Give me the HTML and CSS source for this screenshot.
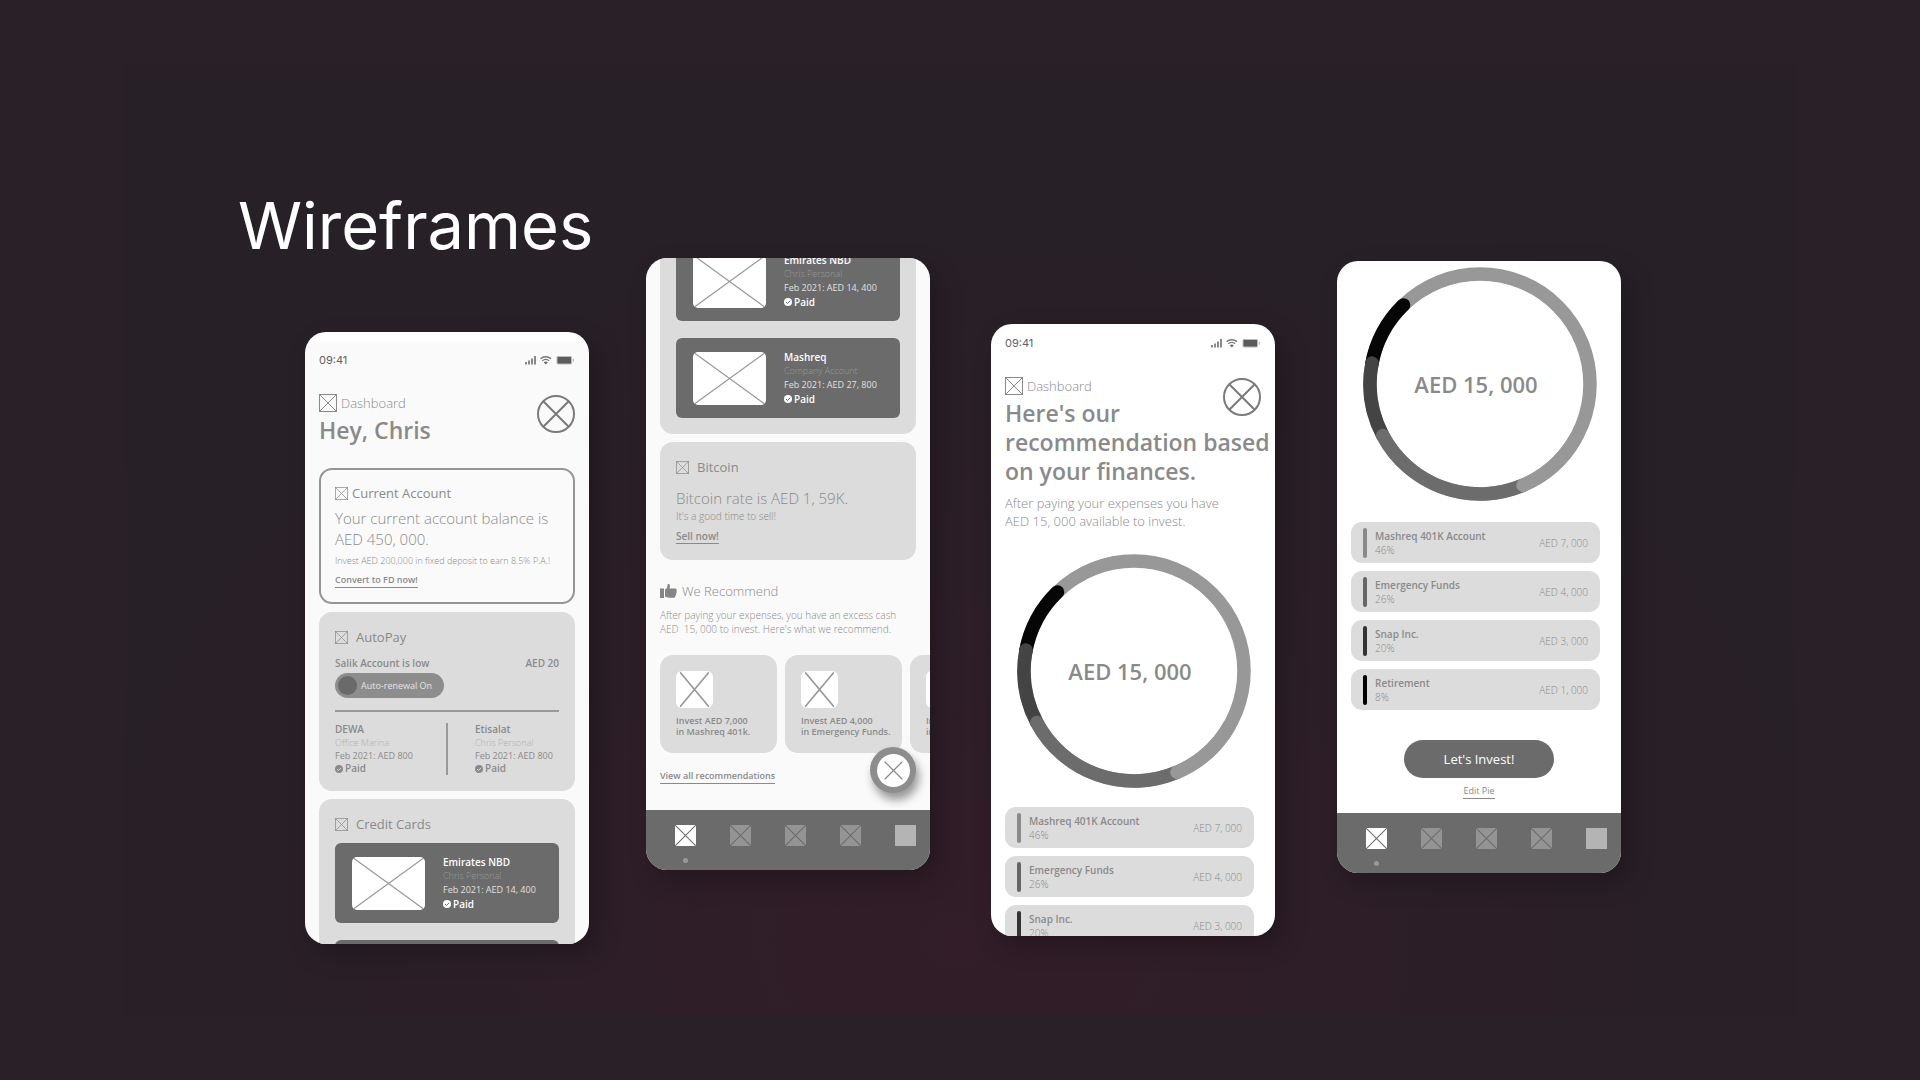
FILE: index.html
```
<!DOCTYPE html>
<html lang="en">
<head>
  <meta charset="UTF-8">
  <title>Wireframes</title>
  <link rel="stylesheet" href="styles.css">
</head>
<body>

  <!-- shared symbols -->
  <svg class="defs" aria-hidden="true">
    <symbol id="box" viewBox="0 0 18 18">
      <rect x=".5" y=".5" width="17" height="17"/>
      <path d="M.5 .5l17 17M17.5 .5l-17 17"/>
    </symbol>
    <symbol id="cross" viewBox="0 0 20 20" preserveAspectRatio="none">
      <path d="M0 0l20 20M20 0L0 20"/>
    </symbol>
    <symbol id="round" viewBox="0 0 38 38">
      <circle cx="19" cy="19" r="18"/>
      <path d="M6.3 6.3l25.4 25.4M31.7 6.3L6.3 31.7"/>
    </symbol>
    <symbol id="check" viewBox="0 0 8 8">
      <circle cx="4" cy="4" r="4" fill="currentColor"/>
      <path class="tick" d="M2 4.1l1.5 1.4L6.1 2.8"/>
    </symbol>
    <symbol id="system" viewBox="0 0 50 12">
      <path d="M1 8v2.5M4 6.5v4M7 4.5v6M10 2v8.500" stroke="#6b6b6b" stroke-width="1.6"/>
      <path d="M15.500 4.700a8 8 0 0 1 10.500 0M17.300 6.800a5.300 5.300 0 0 1 6.900 0" fill="none" stroke="#777" stroke-width="1.300"/>
      <path d="M18.800 8.300a3 3 0 0 1 4 0l-2 2.200z" fill="#666"/>
      <rect x="32" y="2.500" width="14.500" height="7.500" rx="1" fill="#5c5c5c" stroke="#bbb"/>
      <path d="M48.300 4.800v3" stroke="#bbb" stroke-width="1.200"/>
    </symbol>
    <symbol id="ring" viewBox="0 0 234 234">
      <g fill="none" stroke-width="13.500" stroke-linecap="round">
        <circle cx="117" cy="117" r="110" stroke="#989898"/>
        <circle cx="117" cy="117" r="110" pathLength="360" stroke="#060606" stroke-dasharray="36 400" transform="rotate(190 117 117)"/>
        <circle cx="117" cy="117" r="110" pathLength="360" stroke="#444" stroke-dasharray="39 400" transform="rotate(152 117 117)"/>
        <circle cx="117" cy="117" r="110" pathLength="360" stroke="#6c6c6c" stroke-dasharray="85 400" transform="rotate(67 117 117)"/>
        <circle cx="117" cy="117" r="110" pathLength="360" stroke="#989898" stroke-dasharray="37 400" transform="rotate(30 117 117)"/>
      </g>
    </symbol>
  </svg>

  <h1>Wireframes</h1>

  <main class="phones">

    <!-- home -->
    <section class="phone home">
      <div class="screen">
        <div class="status"><span>09:41</span><svg><use href="#system"/></svg></div>
        <header class="head">
          <div class="crumb"><svg><use href="#box"/></svg>Dashboard</div>
          <h2>Hey, Chris</h2>
          <button class="avatar" aria-label="Profile"><svg><use href="#round"/></svg></button>
        </header>

        <article class="card outlined">
          <h3 class="near"><svg><use href="#box"/></svg>Current Account</h3>
          <p class="big">Your current account balance is AED 450, 000.</p>
          <p class="small">Invest AED 200,000 in fixed deposit to earn 8.5% P.A.!</p>
          <a class="link" href="#">Convert to FD now!</a>
        </article>

        <article class="card">
          <h3><svg><use href="#box"/></svg>AutoPay</h3>
          <div class="low"><span>Salik Account is low</span><span>AED 20</span></div>
          <label class="toggle"><input type="checkbox" checked>Auto-renewal On</label>
          <div class="bills">
            <div class="bill">
              <b>DEWA</b>
              <i>Office Marina</i>
              <span>Feb 2021: AED 800</span>
              <b class="paid"><svg><use href="#check"/></svg>Paid</b>
            </div>
            <div class="bill">
              <b>Etisalat</b>
              <i>Chris Personal</i>
              <span>Feb 2021: AED 800</span>
              <b class="paid"><svg><use href="#check"/></svg>Paid</b>
            </div>
          </div>
        </article>

        <article class="card">
          <h3><svg><use href="#box"/></svg>Credit Cards</h3>
          <div class="cards">
            <div class="credit">
              <svg class="photo"><use href="#cross"/></svg>
              <div class="bill">
                <b>Emirates NBD</b>
                <i>Chris Personal</i>
                <span>Feb 2021: AED 14, 400</span>
                <b class="paid"><svg><use href="#check"/></svg>Paid</b>
              </div>
            </div>
            <div class="credit"></div>
          </div>
        </article>
      </div>
    </section>

    <!-- home, scrolled down -->
    <section class="phone scrolled">
      <div class="screen">
        <article class="card">
          <div class="cards">
            <div class="credit">
              <svg class="photo"><use href="#cross"/></svg>
              <div class="bill">
                <b>Emirates NBD</b>
                <i>Chris Personal</i>
                <span>Feb 2021: AED 14, 400</span>
                <b class="paid"><svg><use href="#check"/></svg>Paid</b>
              </div>
            </div>
            <div class="credit">
              <svg class="photo"><use href="#cross"/></svg>
              <div class="bill">
                <b>Mashreq</b>
                <i>Company Account</i>
                <span>Feb 2021: AED 27, 800</span>
                <b class="paid"><svg><use href="#check"/></svg>Paid</b>
              </div>
            </div>
          </div>
        </article>

        <article class="card bitcoin">
          <h3><svg><use href="#box"/></svg>Bitcoin</h3>
          <p class="big">Bitcoin rate is AED 1, 59K.</p>
          <p class="small">It's a good time to sell!</p>
          <a class="link" href="#">Sell now!</a>
        </article>

        <h3 class="recommend">
          <svg viewBox="0 0 17 14"><path d="M0 4.500h4V14H0zM5 5.500C7 4.500 7.500 3 7.500 1 7.500-.3 10-.3 10 2c0 1-.3 1.700-.6 2.500H15c1.500 0 2.200 1.300 1.300 2.400.7.800.6 1.800-.2 2.400.4.900.1 1.800-.7 2.200.2 1.300-.6 2.200-2 2.200H9c-1.500 0-2.500-.7-4-1.200z"/></svg>
          We Recommend
        </h3>
        <p class="small">After paying your expenses, you have an excess cash<br>AED&nbsp; 15, 000 to invest. Here's what we recommend.</p>
        <div class="tiles">
          <div class="tile"><svg><use href="#cross"/></svg>Invest AED 7,000<br>in Mashreq 401k.</div>
          <div class="tile"><svg><use href="#cross"/></svg>Invest AED 4,000<br>in Emergency Funds.</div>
          <div class="tile"><svg><use href="#cross"/></svg>Invest AED 3,000<br>in Snap Inc.</div>
        </div>
        <a class="link" href="#">View all recommendations</a>
      </div>
      <button class="fab" aria-label="Assistant"><svg><use href="#cross"/></svg></button>
      <nav class="tabs">
        <a class="active" href="#" aria-label="Home"><svg><use href="#cross"/></svg></a>
        <a href="#" aria-label="Accounts"><svg><use href="#cross"/></svg></a>
        <a href="#" aria-label="Cards"><svg><use href="#cross"/></svg></a>
        <a href="#" aria-label="Invest"><svg><use href="#cross"/></svg></a>
        <a class="plain" href="#" aria-label="More"></a>
      </nav>
    </section>

    <!-- recommendation -->
    <section class="phone advice">
      <div class="screen">
        <div class="status"><span>09:41</span><svg><use href="#system"/></svg></div>
        <header class="head">
          <div class="crumb"><svg><use href="#box"/></svg>Dashboard</div>
          <h2>Here's our<br>recommendation based<br>on your finances.</h2>
          <button class="avatar" aria-label="Profile"><svg><use href="#round"/></svg></button>
        </header>
        <p class="lead">After paying your expenses you have<br>AED 15, 000 available to invest.</p>
        <div class="pie"><svg><use href="#ring"/></svg><strong>AED 15, 000</strong></div>
        <ul class="shares">
          <li class="s1"><div><b>Mashreq 401K Account</b><small>46%</small></div><span>AED 7, 000</span></li>
          <li class="s2"><div><b>Emergency Funds</b><small>26%</small></div><span>AED 4, 000</span></li>
          <li class="s3"><div><b>Snap Inc.</b><small>20%</small></div><span>AED 3, 000</span></li>
        </ul>
      </div>
    </section>

    <!-- recommendation, scrolled down -->
    <section class="phone invest">
      <div class="screen">
        <div class="pie"><svg><use href="#ring"/></svg><strong>AED 15, 000</strong></div>
        <ul class="shares">
          <li class="s1"><div><b>Mashreq 401K Account</b><small>46%</small></div><span>AED 7, 000</span></li>
          <li class="s2"><div><b>Emergency Funds</b><small>26%</small></div><span>AED 4, 000</span></li>
          <li class="s3"><div><b>Snap Inc.</b><small>20%</small></div><span>AED 3, 000</span></li>
          <li class="s4"><div><b>Retirement</b><small>8%</small></div><span>AED 1, 000</span></li>
        </ul>
        <div class="actions">
          <button class="cta">Let's Invest!</button>
          <a class="link" href="#">Edit Pie</a>
        </div>
      </div>
      <nav class="tabs">
        <a class="active" href="#" aria-label="Home"><svg><use href="#cross"/></svg></a>
        <a href="#" aria-label="Accounts"><svg><use href="#cross"/></svg></a>
        <a href="#" aria-label="Cards"><svg><use href="#cross"/></svg></a>
        <a href="#" aria-label="Invest"><svg><use href="#cross"/></svg></a>
        <a class="plain" href="#" aria-label="More"></a>
      </nav>
    </section>

  </main>
</body>
</html>
```

FILE: styles.css
```
* {
  box-sizing: border-box;
}
body {
  margin: 0;
  min-height: 100vh;
  padding-top: 194px;
  font-family: "Open Sans", "Noto Sans", sans-serif;
  color: #8a8a8a;
  background: #2a2027 radial-gradient(ellipse 62% 88% at 50% 92%, #321d28, #2a1f27 65%, #272127 100%) no-repeat center / 87% 88%;
}
h1, h2, h3, p, ul {
  margin: 0;
  padding: 0;
  font-weight: 400;
}
h1 {
  padding-left: 238px;
  font-family: Inter, sans-serif;
  font-size: 65px;
  line-height: 64px;
  color: #fff;
}
button {
  padding: 0;
  border: none;
  background: none;
  font-family: inherit;
}
svg {
  display: block;
  flex: none;
}
.defs {
  position: absolute;
  width: 0;
  height: 0;
}

/* phones */
.phones {
  display: flex;
  justify-content: center;
  padding-left: 6px;
}
.phone {
  position: relative;
  display: flex;
  flex-direction: column;
  flex: none;
  width: 284px;
  height: 612px;
  border-radius: 21px;
  overflow: hidden;
  background: #fafafa;
  box-shadow: 8px 10px 24px rgba(0, 0, 0, 0.25);
}
.home {
  margin: 74px 57px 0 0;
  background: linear-gradient(#fff 10px, #fafafa 10px);
}
.scrolled {
  margin-right: 61px;
}
.advice {
  margin: 66px 62px 0 0;
  background: #fff;
}
.invest {
  margin-top: 3px;
  background: #fff;
}
.screen {
  flex: 1;
  min-height: 0;
  padding: 11px 14px 0;
  overflow: hidden;
}
.home .screen {
  padding-top: 20px;
}
.scrolled .screen {
  padding-top: 0;
}
.invest .screen {
  padding-top: 6px;
}

.status {
  display: flex;
  justify-content: space-between;
  align-items: center;
  height: 16px;
  font-family: Inter, sans-serif;
  font-size: 11px;
  color: #5f5f5f;
}
.status svg {
  width: 50px;
  height: 12px;
}

.head {
  position: relative;
  padding-top: 26px;
}
.crumb {
  display: flex;
  gap: 4px;
  font-size: 13px;
  line-height: 18px;
  font-weight: 300;
}
.crumb svg {
  width: 18px;
  height: 18px;
}
.crumb svg, h3 svg {
  fill: none;
  stroke: #8a8a8a;
}
.head h2 {
  margin-top: 4px;
  font-size: 23px;
  line-height: 29px;
  font-weight: 600;
  white-space: nowrap;
}
.avatar {
  position: absolute;
  top: 27px;
  right: 0;
}
.avatar svg {
  width: 38px;
  height: 38px;
  fill: none;
  stroke: #7a7a7a;
  stroke-width: 2;
}

/* cards */
.card {
  margin-top: 8px;
  padding: 16px;
  border-radius: 13px;
  background: #dcdcdc;
}
.outlined {
  margin-top: 23px;
  padding: 14px;
  border: 2px solid #959595;
  background: none;
}
h3 {
  display: flex;
  align-items: center;
  gap: 8px;
  font-size: 13px;
  line-height: 18px;
}
h3 svg {
  width: 13px;
  height: 13px;
}
h3.near {
  gap: 4px;
}
.big {
  margin-top: 6px;
  font-size: 15px;
  line-height: 21px;
  font-weight: 300;
}
.small {
  margin-top: 4px;
  font-size: 9px;
  line-height: 14px;
  font-weight: 300;
  white-space: nowrap;
}
.link {
  display: block;
  width: fit-content;
  margin-top: 5px;
  border-bottom: 1px solid #8a8a8a;
  font-size: 9px;
  line-height: 14px;
  font-weight: 600;
  color: #8a8a8a;
  text-decoration: none;
}
.low {
  display: flex;
  justify-content: space-between;
  margin-top: 10px;
  font-size: 10px;
  line-height: 14px;
  font-weight: 600;
}
.toggle {
  display: flex;
  align-items: center;
  gap: 4px;
  width: 109px;
  height: 25px;
  margin-top: 3px;
  padding: 0 3px;
  border-radius: 13px;
  font-size: 9px;
  color: #e6e6e6;
  background: #8d8d8d;
  white-space: nowrap;
}
.toggle input {
  appearance: none;
  width: 19px;
  height: 19px;
  margin: 0;
  border-radius: 50%;
  background: #6a6a6a;
}
.bills {
  display: flex;
  margin-top: 12px;
  padding-top: 11px;
  border-top: 2px solid #999;
}
.bills .bill {
  flex: 0 0 111px;
  line-height: 13px;
}
.bills .bill + .bill {
  padding-left: 27px;
  border-left: 2px solid #999;
}
.bill b, .bill i, .bill span {
  display: block;
  white-space: nowrap;
}
.bill {
  --tick: #dcdcdc;
  font-size: 9px;
  line-height: 14px;
}
.bill b {
  font-size: 10px;
  font-weight: 600;
}
.bill i {
  font-style: normal;
  font-weight: 300;
  color: #b0b0b0;
}
.bill .paid {
  display: flex;
  align-items: center;
  gap: 2px;
}
.paid svg {
  width: 8px;
  height: 8px;
}
.tick {
  fill: none;
  stroke: var(--tick);
}
.cards {
  display: grid;
  gap: 17px;
  margin-top: 10px;
}
.credit {
  display: flex;
  align-items: center;
  gap: 18px;
  height: 80px;
  padding: 0 17px;
  border-radius: 6px;
  color: #fff;
  background: #6b6b6b;
}
.credit .bill {
  --tick: #6b6b6b;
}
.credit i {
  color: #999;
}
.credit span {
  color: #e0e0e0;
}
.photo {
  width: 73px;
  height: 53px;
  border-radius: 5px;
  background: #fff;
  stroke: #999;
  stroke-width: 0.4;
}
.scrolled .card:first-child {
  margin-top: -43px;
}
.bitcoin .big {
  margin-top: 12px;
}
.bitcoin .small {
  margin-top: 0;
  font-size: 10px;
}
.bitcoin .link {
  margin-top: 6px;
  font-size: 10px;
}

/* recommendations */
.recommend {
  gap: 5px;
  margin-top: 22px;
  font-weight: 300;
}
.recommend svg {
  width: 17px;
  height: 14px;
  fill: #858585;
  stroke: none;
}
.recommend + .small {
  margin-top: 8px;
  font-size: 10px;
}
.tiles {
  display: flex;
  gap: 8px;
  margin: 19px 0 16px;
}
.tile {
  flex: none;
  width: 117px;
  height: 98px;
  padding: 16px 0 0 16px;
  border-radius: 13px;
  font-size: 9px;
  line-height: 11px;
  font-weight: 600;
  background: #dcdcdc;
  white-space: nowrap;
}
.tile svg {
  width: 37px;
  height: 37px;
  margin-bottom: 7px;
  padding: 0 3px;
  border-radius: 6px;
  background: #fff;
  stroke: #999;
}
.tiles + .link {
  margin-top: 0;
}
.fab {
  position: absolute;
  right: 14px;
  bottom: 77px;
  display: grid;
  place-items: center;
  width: 46px;
  height: 46px;
  border-radius: 50%;
  background: #8d8d8d;
  box-shadow: 3px 7px 10px rgba(0, 0, 0, 0.4);
}
.fab svg {
  width: 33px;
  height: 33px;
  padding: 4px;
  border-radius: 50%;
  background: #fff;
  stroke: #888;
}

.tabs {
  display: flex;
  justify-content: space-between;
  flex: none;
  height: 60px;
  padding: 15px 14px 0 29px;
  background: #6b6b6b;
}
.tabs a {
  position: relative;
  width: 21px;
  height: 21px;
  background: #949494;
}
.tabs svg {
  width: 21px;
  height: 21px;
  stroke: #6b6b6b;
}
.tabs .active {
  background: #fff;
}
.tabs .active::after {
  content: "";
  position: absolute;
  left: 8px;
  top: 33px;
  width: 5px;
  height: 5px;
  border-radius: 50%;
  background: #999;
}
.tabs .plain {
  background: #b4b4b4;
}

/* pie and shares */
.lead {
  margin-top: 8px;
  font-size: 13px;
  line-height: 18px;
  font-weight: 300;
}
.pie {
  display: grid;
  place-items: center;
  margin-top: 24px;
}
.invest .pie {
  margin-top: 0;
}
.pie > * {
  grid-area: 1 / 1;
}
.pie svg {
  width: 234px;
  height: 234px;
  margin-left: 2px;
}
.pie strong {
  margin-right: 6px;
  font-size: 22px;
  font-weight: 600;
}
.shares {
  display: grid;
  gap: 8px;
  width: 249px;
  margin-top: 19px;
  list-style: none;
}
.invest .shares {
  margin-top: 21px;
}
.shares li {
  display: flex;
  align-items: center;
  height: 41px;
  padding: 0 12px;
  border-radius: 11px;
  font-size: 10px;
  background: #dcdcdc;
}
.shares li::before {
  content: "";
  width: 4px;
  height: 30px;
  margin-right: 8px;
  border-radius: 2px;
  background: #8a8a8a;
}
.shares .s2::before {
  background: #666;
}
.shares .s3::before {
  background: #333;
}
.shares .s4::before {
  background: #000;
}
.shares div {
  flex: 1;
}
.shares b, .shares small {
  display: block;
  font-size: 10px;
  line-height: 14px;
  font-weight: 600;
}
.shares small, .shares span {
  font-weight: 300;
}
.actions {
  display: flex;
  flex-direction: column;
  align-items: center;
  margin-top: 30px;
}
.cta {
  width: 150px;
  height: 38px;
  border-radius: 19px;
  font-size: 13px;
  color: #fff;
  background: #6b6b6b;
}
.actions .link {
  margin-top: 6px;
  font-weight: 400;
}
```
